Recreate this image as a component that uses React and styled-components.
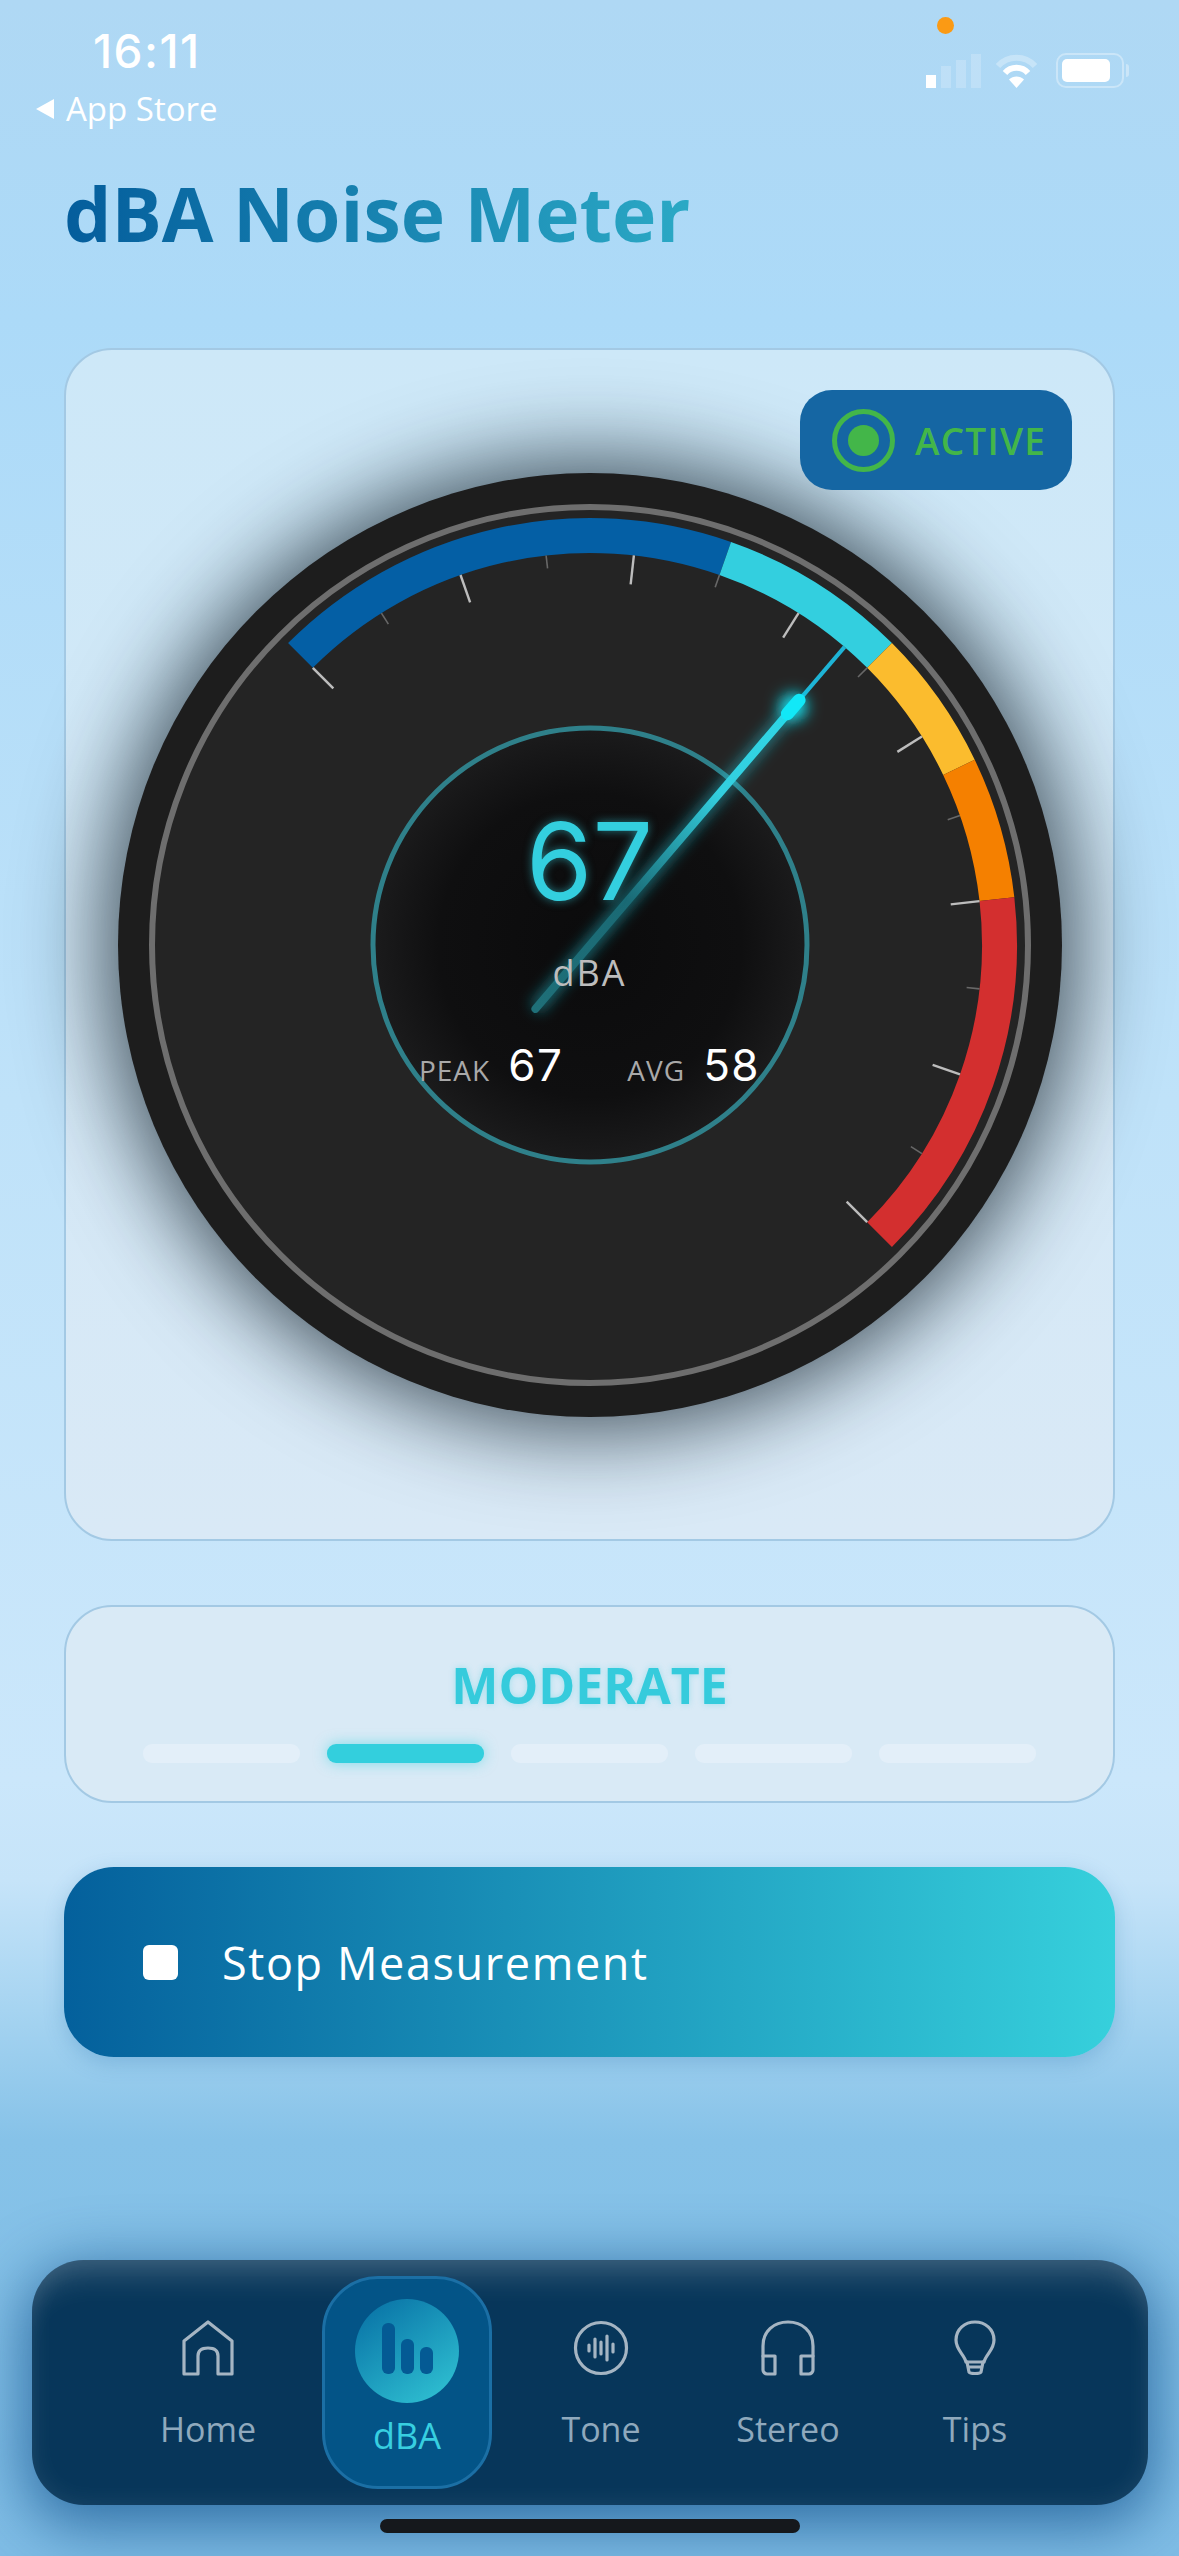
import React from 'react'
import styled, { createGlobalStyle, css } from 'styled-components'

const GlobalStyle = createGlobalStyle`
  html, body {
    margin: 0;
    padding: 0;
    background: #aed8f4;
  }
  * { box-sizing: border-box; }
`

const SANS = `"Open Sans", "Noto Sans", sans-serif`
const DIGITS = `Inter, "Liberation Sans", sans-serif`

// dial geometry, angles in degrees clockwise from 12 o'clock
const SIZE = 944
const C = SIZE / 2
const ARC_R = 409.5
const ARC_W = 35
const TICK_R = 392
const START = -45
const STEP = 180 / 14

const segments = [
  { from: 0, to: 5, color: '#045fa5' },
  { from: 5, to: 7, color: '#33cfdf' },
  { from: 7, to: 8.5, color: '#fbbc2e' },
  { from: 8.5, to: 10, color: '#f58000' },
  { from: 10, to: 14, color: '#d32f2f' },
]

const polar = (r, deg) => {
  const a = (deg * Math.PI) / 180
  return [C + r * Math.sin(a), C - r * Math.cos(a)]
}

const arcPath = (r, a0, a1) => {
  const [x0, y0] = polar(r, a0)
  const [x1, y1] = polar(r, a1)
  return `M${x0} ${y0} A${r} ${r} 0 ${a1 - a0 > 180 ? 1 : 0} 1 ${x1} ${y1}`
}

const Screen = styled.div`
  position: relative;
  width: 1179px;
  height: 2556px;
  overflow: hidden;
  display: flex;
  flex-direction: column;
  font-family: ${SANS};
  background: linear-gradient(
    180deg,
    #afd8f4 0,
    #acdaf8 320px,
    #bfe2f9 1100px,
    #cbe7fb 1780px,
    #c6e4f9 1880px,
    #a6d4f1 2010px,
    #86c2e8 2140px,
    #7fbde6 2556px
  );
`

const StatusBar = styled.div`
  display: flex;
  justify-content: space-between;
  height: 130px;
  padding: 0 50px 0 36px;
`

const StatusLeft = styled.div`
  display: flex;
  flex-direction: column;
  align-items: flex-start;
  padding-top: 29px;
`

const Clock = styled.div`
  margin-left: 57px;
  font-family: ${DIGITS};
  font-size: 46px;
  line-height: 44px;
  font-weight: 500;
  letter-spacing: 1.5px;
  color: #fff;
`

const BackLink = styled.div`
  display: flex;
  align-items: center;
  gap: 12px;
  margin-top: 17px;
  font-size: 33px;
  line-height: 38px;
  color: #fff;
  &::before {
    content: '';
    border-style: solid;
    border-width: 10px 18px 10px 0;
    border-color: transparent #fff transparent transparent;
  }
`

const StatusRight = styled.div`
  position: relative;
  display: flex;
  align-items: flex-end;
  gap: 10px;
  height: 88px;
`

const RecordingDot = styled.span`
  position: absolute;
  left: 11px;
  top: 17px;
  width: 17px;
  height: 17px;
  border-radius: 50%;
  background: #fb9a14;
`

const SignalBars = styled.div`
  display: flex;
  align-items: flex-end;
  gap: 5px;
  margin-right: 5px;
`

const SignalBar = styled.span`
  width: 10px;
  height: ${(p) => p.$h}px;
  background: ${(p) => (p.$on ? '#fff' : 'rgba(255,255,255,.2)')};
`

const Battery = styled.div`
  position: relative;
  width: 68px;
  height: 35px;
  padding: 4px;
  border: 2px solid rgba(255, 255, 255, 0.35);
  border-radius: 10px;
  margin: 0 5px 0 9px;
  &::before {
    content: '';
    display: block;
    width: 48px;
    height: 23px;
    border-radius: 5px;
    background: #fff;
  }
  &::after {
    content: '';
    position: absolute;
    right: -7px;
    top: 9px;
    width: 3px;
    height: 13px;
    border-radius: 0 3px 3px 0;
    background: rgba(255, 255, 255, 0.35);
  }
`

const Content = styled.main`
  display: flex;
  flex-direction: column;
  padding: 0 64px;
`

const Title = styled.h1`
  margin: 33px 0 0;
  height: 185px;
  font-size: 75px;
  line-height: 100px;
  font-weight: 700;
  background: linear-gradient(90deg, #045d9c 0, #2ba9c5 625px);
  -webkit-background-clip: text;
  background-clip: text;
  color: transparent;
`

const panel = css`
  border: 2px solid #a3c9e4;
  border-radius: 48px;
  background: linear-gradient(180deg, #cde8f8 0%, #d9e9f6 100%);
`

const GaugeCard = styled.section`
  ${panel}
  position: relative;
  height: 1193px;
  display: flex;
  align-items: center;
  justify-content: center;
`

const ActiveBadge = styled.div`
  position: absolute;
  top: 40px;
  right: 41px;
  z-index: 2;
  width: 272px;
  height: 100px;
  display: flex;
  align-items: center;
  gap: 20px;
  padding-left: 32px;
  border-radius: 32px;
  background: #1566a3;
  color: #43b649;
  font-size: 37px;
  font-weight: 600;
  letter-spacing: 1.2px;
`

const ActiveLamp = styled.span`
  width: 63px;
  height: 63px;
  flex: none;
  display: grid;
  place-items: center;
  border: 5px solid #43b649;
  border-radius: 50%;
  &::after {
    content: '';
    width: 31px;
    height: 31px;
    border-radius: 50%;
    background: #43b649;
  }
`

const Dial = styled.div`
  position: relative;
  width: ${SIZE}px;
  height: ${SIZE}px;
  flex: none;
  border-radius: 50%;
  background: #1d1d1d;
  box-shadow: 0 0 85px 14px rgba(8, 22, 32, 0.72);
  svg {
    display: block;
  }
`

const Readout = styled.div`
  position: absolute;
  left: 253px;
  top: 253px;
  width: 438px;
  height: 438px;
  display: flex;
  flex-direction: column;
  align-items: center;
`

const Level = styled.div`
  margin-top: 82px;
  font-family: ${DIGITS};
  font-size: 107px;
  line-height: 106px;
  font-weight: 400;
  color: #33cfdf;
  text-shadow: 0 0 10px rgba(51, 207, 223, 0.55);
`

const Unit = styled.div`
  margin-top: 35px;
  font-size: 36px;
  line-height: 48px;
  letter-spacing: 2px;
  color: #bdbdbd;
`

const Stats = styled.div`
  display: flex;
  gap: 64px;
  margin-top: 45px;
  width: 334px;
  justify-content: center;
  white-space: nowrap;
`

const Stat = styled.div`
  display: flex;
  align-items: baseline;
  gap: 18px;
`

const StatLabel = styled.span`
  font-size: 28px;
  letter-spacing: 1px;
  color: #a9a9a9;
`

const StatValue = styled.span`
  font-family: ${DIGITS};
  font-size: 44px;
  line-height: 46px;
  letter-spacing: 1.5px;
  color: #fff;
`

const LevelCard = styled.section`
  ${panel}
  margin-top: 64px;
  height: 198px;
  background: #d9eaf6;
  display: flex;
  flex-direction: column;
  align-items: center;
`

const LevelName = styled.div`
  margin-top: 48px;
  font-size: 50px;
  line-height: 60px;
  font-weight: 700;
  color: #35cbdc;
  text-shadow: 0 0 6px rgba(53, 203, 220, 0.35);
`

const LevelBars = styled.div`
  display: flex;
  gap: 27px;
  margin-top: 29px;
`

const LevelBar = styled.span`
  width: 157px;
  height: 19px;
  border-radius: 9px;
  background: ${(p) => (p.$on ? '#33cfdd' : '#e3eff9')};
  box-shadow: ${(p) => (p.$on ? '0 0 14px rgba(51,207,221,.55)' : 'none')};
`

const StopButton = styled.button`
  margin-top: 64px;
  height: 190px;
  display: flex;
  align-items: center;
  gap: 44px;
  padding: 0 0 0 79px;
  border: 0;
  border-radius: 50px;
  background: linear-gradient(90deg, #04609c 0%, #36d0dc 100%);
  color: #fff;
  font-family: ${SANS};
  font-size: 45px;
  font-weight: 500;
  letter-spacing: 1.6px;
  box-shadow: 0 6px 20px rgba(40, 110, 170, 0.25);
`

const StopSquare = styled.span`
  width: 35px;
  height: 35px;
  border-radius: 6px;
  background: #fff;
`

const TabBar = styled.nav`
  position: absolute;
  left: 32px;
  top: 2260px;
  width: 1116px;
  height: 245px;
  display: grid;
  grid-template-columns: 228px 170px 218px 156px 218px;
  padding-left: 62px;
  align-items: start;
  border-radius: 52px;
  background: #07365a;
  box-shadow: 0 14px 60px 8px rgba(6, 70, 130, 0.65),
    inset 0 34px 30px -18px rgba(255, 255, 255, 0.17),
    inset 0 0 26px rgba(255, 255, 255, 0.09);
`

const Tab = styled.div`
  display: flex;
  flex-direction: column;
  align-items: center;
  padding-top: 60px;
  font-size: 34px;
  line-height: 44px;
  color: #8fa9bd;
  svg {
    width: 56px;
    height: 56px;
    margin-bottom: 31px;
    fill: none;
    stroke: #a5b5c3;
    stroke-width: 3.2;
    stroke-linejoin: round;
    stroke-linecap: round;
  }
`

const ActiveTab = styled.div`
  margin: 16px 0 0;
  height: 213px;
  display: flex;
  flex-direction: column;
  align-items: center;
  padding-top: 20px;
  border: 3px solid #1b6fa5;
  border-radius: 56px;
  background: #035487;
  color: #37cfe0;
  font-size: 36px;
  line-height: 44px;
`

const ActiveIcon = styled.span`
  width: 104px;
  height: 104px;
  margin-bottom: 11px;
  display: flex;
  align-items: flex-end;
  justify-content: center;
  gap: 6px;
  padding-bottom: 29px;
  border-radius: 50%;
  background: linear-gradient(145deg, #0a76a8 10%, #30c2d3 95%);
`

const ActiveBar = styled.span`
  width: 13px;
  height: ${(p) => p.$h}px;
  border-radius: 6px;
  background: #045a94;
`

const HomeIndicator = styled.div`
  position: absolute;
  left: 380px;
  top: 2519px;
  width: 420px;
  height: 14px;
  border-radius: 7px;
  background: #15181c;
`

function Gauge() {
  const tipDeg = 40.5
  const [tx, ty] = polar(392, tipDeg)
  const [dx, dy] = polar(322, tipDeg)
  const [bx, by] = polar(-84, tipDeg)
  const [gx, gy] = polar(304, tipDeg)
  const [hx, hy] = polar(313, tipDeg)

  return (
    <Dial>
      <svg width={SIZE} height={SIZE} viewBox={`0 0 ${SIZE} ${SIZE}`}>
        <defs>
          <radialGradient id="hub">
            <stop offset="0%" stopColor="#0b0b0c" />
            <stop offset="70%" stopColor="#0f0f10" />
            <stop offset="100%" stopColor="#1b1b1c" />
          </radialGradient>
          <linearGradient id="needle" gradientUnits="userSpaceOnUse" x1={bx} y1={by} x2={dx} y2={dy}>
            <stop offset="0%" stopColor="#1f6f78" />
            <stop offset="35%" stopColor="#1a6a75" />
            <stop offset="70%" stopColor="#33cfdf" />
            <stop offset="100%" stopColor="#2fd6e6" />
          </linearGradient>
          <filter id="glow" x="-30%" y="-30%" width="160%" height="160%">
            <feGaussianBlur stdDeviation="7" />
          </filter>
          <filter id="glowTip" x="-200%" y="-200%" width="500%" height="500%">
            <feGaussianBlur stdDeviation="8" />
          </filter>
        </defs>

        <circle cx={C} cy={C} r="436" fill="#242424" />
        <circle cx={C} cy={C} r="438" fill="none" stroke="#6e6e6e" strokeWidth="6" />

        {segments.map((s) => (
          <path
            key={s.color}
            d={arcPath(ARC_R, START + s.from * STEP, START + s.to * STEP)}
            fill="none"
            stroke={s.color}
            strokeWidth={ARC_W}
          />
        ))}

        {/* long ticks on even steps, short ones between */}
        {Array.from({ length: 15 }, (_, i) => {
          const a = START + i * STEP
          const major = i % 2 === 0
          const [x0, y0] = polar(TICK_R, a)
          const [x1, y1] = polar(TICK_R - (major ? 29 : 13), a)
          return (
            <line
              key={i}
              x1={x0}
              y1={y0}
              x2={x1}
              y2={y1}
              stroke={major ? '#bdbdbd' : '#686868'}
              strokeWidth={major ? 2.4 : 1.6}
            />
          )
        })}

        <circle cx={C} cy={C} r="217" fill="url(#hub)" stroke="#2f808a" strokeWidth="5" />

        {/* needle: soft glow, thick body up to the hot spot, thin tip past it */}
        <line x1={bx} y1={by} x2={dx} y2={dy} stroke="#24c4d6" strokeOpacity=".5" strokeWidth="14" filter="url(#glow)" />
        <line x1={dx} y1={dy} x2={tx} y2={ty} stroke="#1eb4d6" strokeWidth="4" />
        <line x1={bx} y1={by} x2={dx} y2={dy} stroke="url(#needle)" strokeWidth="8" strokeLinecap="round" />
        <circle cx={hx} cy={hy} r="13" fill="#19e6f5" filter="url(#glowTip)" />
        <line x1={gx} y1={gy} x2={dx} y2={dy} stroke="#12e8f7" strokeWidth="13" strokeLinecap="round" />
      </svg>

      <Readout>
        <Level>67</Level>
        <Unit>dBA</Unit>
        <Stats>
          <Stat>
            <StatLabel>PEAK</StatLabel>
            <StatValue>67</StatValue>
          </Stat>
          <Stat>
            <StatLabel>AVG</StatLabel>
            <StatValue>58</StatValue>
          </Stat>
        </Stats>
      </Readout>
    </Dial>
  )
}

export default function App() {
  return (
    <Screen>
      <GlobalStyle />
      <StatusBar>
        <StatusLeft>
          <Clock>16:11</Clock>
          <BackLink>App Store</BackLink>
        </StatusLeft>
        <StatusRight>
          <RecordingDot />
          <SignalBars>
            <SignalBar $on $h={13} />
            <SignalBar $h={22} />
            <SignalBar $h={28} />
            <SignalBar $h={34} />
          </SignalBars>
          <svg width="41" height="34" viewBox="0 0 41 34" fill="none">
            <path d="M2 12C12 1 29 1 39 12" stroke="#fff" strokeOpacity=".3" strokeWidth="6" />
            <path d="M9 19C15 12 26 12 32 19" stroke="#fff" strokeWidth="6" />
            <path d="M20.5 34L13 25.5C17 21.5 24 21.5 28 25.5Z" fill="#fff" />
          </svg>
          <Battery />
        </StatusRight>
      </StatusBar>

      <Content>
        <Title>dBA Noise Meter</Title>

        <GaugeCard>
          <ActiveBadge>
            <ActiveLamp />
            ACTIVE
          </ActiveBadge>
          <Gauge />
        </GaugeCard>

        <LevelCard>
          <LevelName>MODERATE</LevelName>
          <LevelBars>
            {[0, 1, 2, 3, 4].map((i) => (
              <LevelBar key={i} $on={i === 1} />
            ))}
          </LevelBars>
        </LevelCard>

        <StopButton>
          <StopSquare />
          Stop Measurement
        </StopButton>
      </Content>

      <TabBar>
        <Tab>
          <svg viewBox="0 0 56 56">
            <path d="M4 54V21L28 2L52 21V54H38V36C38 30 34 28 28 28C22 28 18 30 18 36V54Z" />
          </svg>
          Home
        </Tab>
        <ActiveTab>
          <ActiveIcon>
            <ActiveBar $h={51} />
            <ActiveBar $h={35} />
            <ActiveBar $h={27} />
          </ActiveIcon>
          dBA
        </ActiveTab>
        <Tab>
          <svg viewBox="0 0 56 56">
            <circle cx="28" cy="28" r="25.5" />
            <path d="M16 25V31M22 19V37M28 22V34M34 16V40M40 24V32" />
          </svg>
          Tone
        </Tab>
        <Tab>
          <svg viewBox="0 0 56 56">
            <path d="M3 36V26C3 11 14 2 28 2C42 2 53 11 53 26V36" />
            <path d="M3 36H15V54H7C5 54 3 52 3 50ZM53 36H41V54H49C51 54 53 52 53 50Z" />
          </svg>
          Stereo
        </Tab>
        <Tab>
          <svg viewBox="0 0 56 56">
            <path d="M19 42C17 34 9 30 9 20C9 9 18 2 28 2C38 2 47 9 47 20C47 30 39 34 37 42Z" />
            <path d="M20 42L22 52C23 54 33 54 34 52L36 42M21 47H35" />
          </svg>
          Tips
        </Tab>
      </TabBar>

      <HomeIndicator />
    </Screen>
  )
}
